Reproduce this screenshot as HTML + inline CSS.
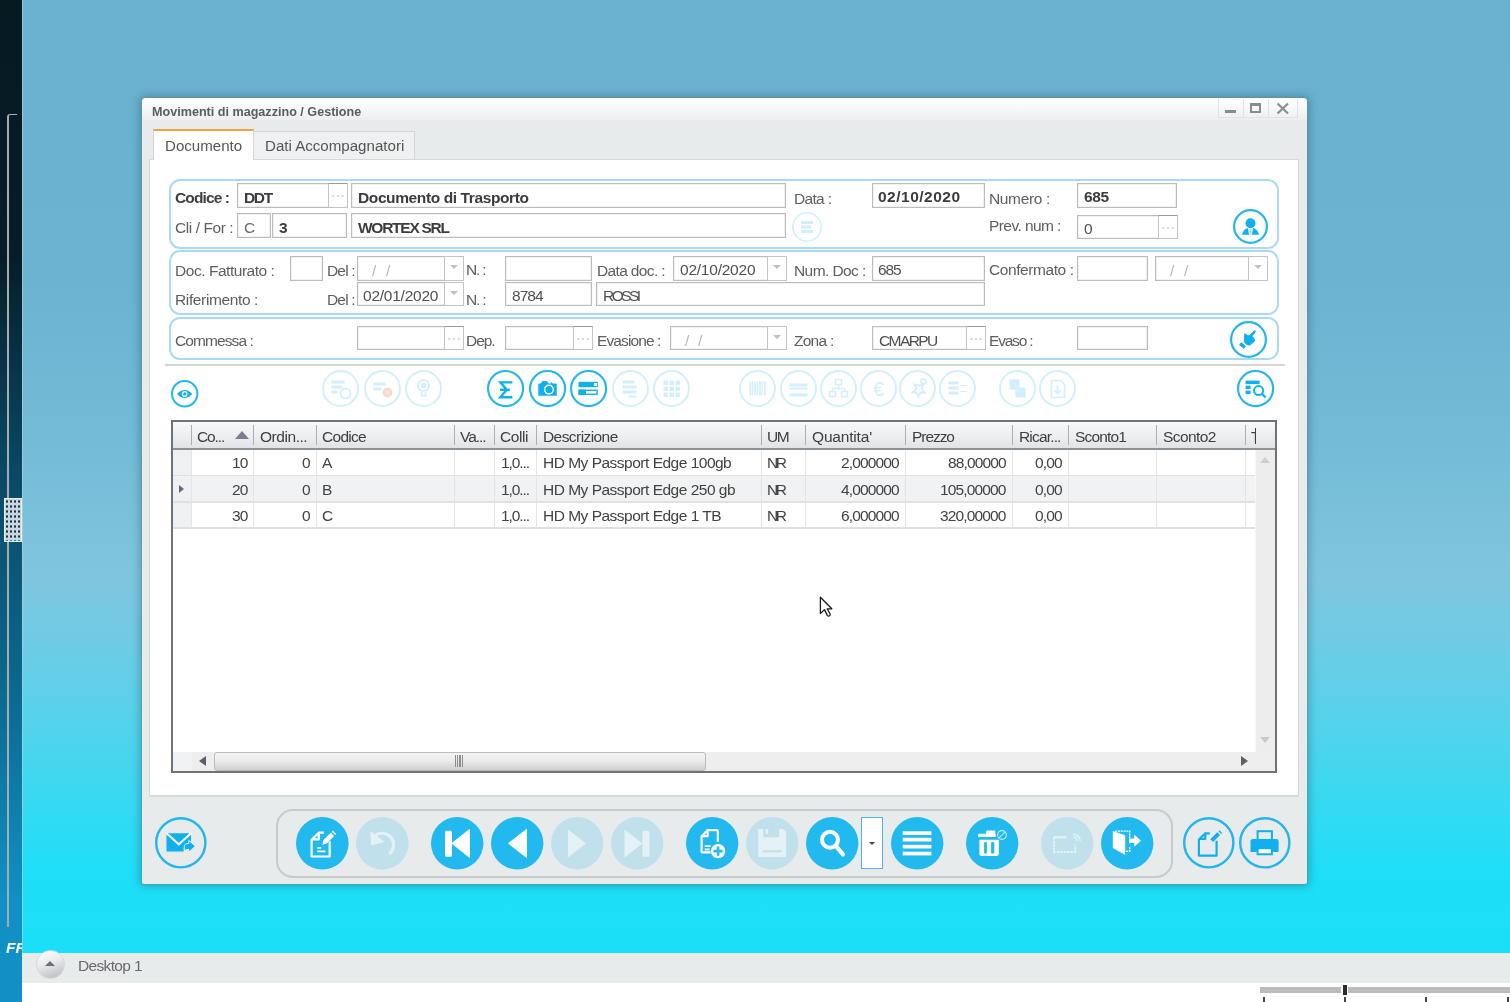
<!DOCTYPE html>
<html><head><meta charset="utf-8"><style>
*{margin:0;padding:0;box-sizing:border-box}
html,body{width:1510px;height:1002px;overflow:hidden}
body{position:relative;font-family:"Liberation Sans", sans-serif;background:#fff}
.a{position:absolute}
.t{position:absolute;white-space:nowrap;line-height:1;will-change:transform}
.inp{background:#fff;border:1px solid #bcbcbc;box-shadow:inset 0 0 0 0.5px #e4e4e4}
.btn3{background:#fff;border:1px solid #c4c4c4;border-top-color:#9a9a9a}
.btn3 span{position:absolute;left:50%;top:11px;width:2px;height:2px;margin-left:-1px;background:#cdcdcd;border-radius:1px;box-shadow:-4.8px 0 0 #cdcdcd,4.8px 0 0 #cdcdcd}
.ddb{background:#fff;border:1px solid #c4c4c4}
.ddb i{position:absolute;left:50%;top:8px;margin-left:-4px;width:0;height:0;border-left:4px solid transparent;border-right:4px solid transparent;border-top:4px solid #c0c0c0}
.grp{position:absolute;border:2px solid #aad9f6;border-radius:11px}
.ic{position:absolute;border-radius:50%}
svg{position:absolute;overflow:visible}
</style></head><body>

<div class="a" style="left:22px;top:0;width:1488px;height:953px;background:linear-gradient(to bottom,#69b1ce 0px,#6bb3d0 280px,#72bad6 430px,#80c5df 575px,#6ccce6 650px,#52d3ec 730px,#34daf3 810px,#1fdef7 870px,#1adff8 953px)"></div>
<div class="a" style="left:0;top:0;width:22px;height:1002px;background:linear-gradient(to bottom,#061a22 0px,#061c26 250px,#0a4a66 480px,#0c6a90 700px,#1090c4 900px,#1090c4 1002px)"></div>
<div class="a" style="left:7px;top:114px;width:10px;height:813px;border-left:2px solid #a4acb0;border-top:1.6px solid #a4acb0;border-radius:3px 0 0 0"></div>
<div class="a" style="left:21.5px;top:0;width:1px;height:953px;background:rgba(190,215,222,0.55)"></div>
<div class="a" style="left:4px;top:498px;width:18px;height:44px;background:#c8d8df;border:1px solid #e8eef0;background-image:radial-gradient(circle,#203040 1px,transparent 1.3px);background-size:4px 5px"></div>
<div class="a" style="left:0;top:936px;width:22px;height:20px;overflow:hidden"><div class="t" style="left:6px;top:4px;font-size:15.5px;font-weight:bold;font-style:italic;color:#fff">FR</div></div>
<div class="a" style="left:22px;top:953px;width:1488px;height:30px;background:#e7ebec;border-top:1px solid #dff6fb"></div>
<div class="ic" style="left:35.5px;top:950px;width:29px;height:29px;background:linear-gradient(160deg,#ffffff 0%,#e8eaec 45%,#b4b8bc 100%);border:1px solid #d6d9db"></div>
<div class="a" style="left:45px;top:961px;width:0;height:0;border-left:5px solid transparent;border-right:5px solid transparent;border-bottom:5px solid #6c7074"></div>
<div class="t" style="left:78.4px;top:957.7px;font-size:15.5px;letter-spacing:-0.65px;color:#6a6a6a;">Desktop 1</div>
<div class="a" style="left:1260px;top:987px;width:81px;height:6px;background:#bbbbbb"></div>
<div class="a" style="left:1343px;top:985px;width:4px;height:10px;background:#2a2a2a"></div>
<div class="a" style="left:1348px;top:987px;width:162px;height:6px;background:#bbbbbb"></div>
<div class="a" style="left:1263px;top:997px;width:2px;height:5px;background:#444"></div>
<div class="a" style="left:1344px;top:997px;width:2px;height:5px;background:#444"></div>
<div class="a" style="left:1425px;top:997px;width:2px;height:5px;background:#444"></div>
<div class="a" style="left:1507px;top:997px;width:2px;height:5px;background:#444"></div>
<div class="a" style="left:142px;top:98px;width:1165px;height:786px;background:#e7ebec;border-radius:4px 4px 2px 2px;box-shadow:0 0 0 1px rgba(120,140,150,0.35),0 0 8px 2px rgba(20,60,80,0.35)"></div>
<div class="a" style="left:142px;top:98px;width:1165px;height:22px;background:linear-gradient(to bottom,#ffffff,#eceff0);border-radius:4px 4px 0 0"></div>
<div class="t" style="left:151.5px;top:106.2px;font-size:12.6px;font-weight:bold;color:#5c5c5c;">Movimenti di magazzino / Gestione</div>
<div class="a" style="left:1218px;top:99px;width:80px;height:19px;border:1px solid #dde3e6;border-top:none;background:transparent"></div>
<div class="a" style="left:1243px;top:99px;width:1px;height:19px;background:#dde3e6"></div>
<div class="a" style="left:1268px;top:99px;width:1px;height:19px;background:#dde3e6"></div>
<div class="a" style="left:1225px;top:110px;width:11px;height:3px;background:#8c8c8c"></div>
<div class="a" style="left:1250px;top:103px;width:11px;height:10px;border:2px solid #8c8c8c;border-top-width:3px"></div>
<svg style="left:1276px;top:102px" width="14" height="13"><path d="M1.5 1.5 L12 11.5 M12 1.5 L1.5 11.5" stroke="#8c8c8c" stroke-width="2.2"/></svg>
<div class="a" style="left:253px;top:131px;width:162px;height:29px;background:#eef0f1;border:1px solid #d3d7d8;border-bottom:none"></div>
<div class="a" style="left:149px;top:159px;width:1150px;height:638px;background:#fff;border:1px solid #d5d9da;border-bottom:2px solid #d8dbdc"></div>
<div class="a" style="left:153px;top:129px;width:101px;height:31px;background:#fff;border:1px solid #d3d7d8;border-top:2.4px solid #f4a13a;border-bottom:none"></div>
<div class="t" style="left:164.7px;top:137.8px;font-size:15.1px;color:#555;">Documento</div>
<div class="t" style="left:264.6px;top:137.8px;font-size:15.1px;color:#555;">Dati Accompagnatori</div>
<div class="grp" style="left:169px;top:179px;width:1110px;height:70px"></div>
<div class="grp" style="left:169px;top:250px;width:1110px;height:65px"></div>
<div class="grp" style="left:169px;top:317px;width:1110px;height:43px"></div>
<div class="t" style="left:175.3px;top:190.3px;font-size:15.5px;font-weight:bold;letter-spacing:-0.88px;color:#404040;">Codice :</div>
<div class="a inp" style="left:237px;top:183px;width:111px;height:25px;"></div>
<div class="a btn3" style="left:328px;top:183px;width:20px;height:25px;"><span></span></div>
<div class="t" style="left:244.2px;top:189.7px;font-size:15.5px;font-weight:bold;letter-spacing:-1.38px;color:#3c3c3c;">DDT</div>
<div class="a inp" style="left:351px;top:183px;width:435px;height:25px;"></div>
<div class="t" style="left:358.0px;top:189.7px;font-size:15.5px;font-weight:bold;letter-spacing:-0.39px;color:#3c3c3c;">Documento di Trasporto</div>
<div class="t" style="left:794.0px;top:190.5px;font-size:15.5px;letter-spacing:-0.67px;color:#5e5e5e;">Data :</div>
<div class="a inp" style="left:872px;top:183px;width:113px;height:25px;"></div>
<div class="t" style="left:878.4px;top:189.4px;font-size:15.5px;font-weight:bold;letter-spacing:0.50px;color:#3c3c3c;">02/10/2020</div>
<div class="t" style="left:989.4px;top:190.5px;font-size:15.5px;letter-spacing:-0.36px;color:#5e5e5e;">Numero :</div>
<div class="a inp" style="left:1077px;top:183px;width:100px;height:25px;"></div>
<div class="t" style="left:1083.7px;top:189.3px;font-size:15.5px;font-weight:bold;letter-spacing:-0.38px;color:#3c3c3c;">685</div>
<div class="t" style="left:175.3px;top:220.3px;font-size:15.5px;letter-spacing:-0.42px;color:#5e5e5e;">Cli / For :</div>
<div class="a inp" style="left:237px;top:213px;width:34px;height:25px;"></div>
<div class="t" style="left:243.5px;top:220.3px;font-size:15.5px;color:#6a6a6a;">C</div>
<div class="a inp" style="left:272px;top:213px;width:75px;height:25px;"></div>
<div class="t" style="left:278.6px;top:220.1px;font-size:15.5px;font-weight:bold;color:#3c3c3c;">3</div>
<div class="a inp" style="left:351px;top:213px;width:435px;height:25px;"></div>
<div class="t" style="left:358.0px;top:220.1px;font-size:15.5px;font-weight:bold;letter-spacing:-1.26px;color:#3c3c3c;">WORTEX SRL</div>
<div class="t" style="left:989.4px;top:218.3px;font-size:15.5px;letter-spacing:-0.57px;color:#5e5e5e;">Prev. num :</div>
<div class="a inp" style="left:1077px;top:215px;width:101px;height:24px;"></div>
<div class="a btn3" style="left:1158px;top:215px;width:20px;height:24px;"><span></span></div>
<div class="t" style="left:1083.7px;top:220.5px;font-size:15.5px;color:#505050;">0</div>
<div class="t" style="left:175.3px;top:262.5px;font-size:15.5px;letter-spacing:-0.46px;color:#5e5e5e;">Doc. Fatturato :</div>
<div class="a inp" style="left:290px;top:256px;width:33px;height:25px;"></div>
<div class="t" style="left:326.7px;top:262.5px;font-size:15.5px;letter-spacing:-0.84px;color:#5e5e5e;">Del :</div>
<div class="a inp" style="left:357px;top:256px;width:107px;height:25px;"></div>
<div class="a ddb" style="left:444px;top:256px;width:20px;height:25px;"><i></i></div>
<div class="t" style="left:372.0px;top:263.0px;font-size:15.5px;color:#b8b8b8;">/</div>
<div class="t" style="left:385.8px;top:263.0px;font-size:15.5px;color:#b8b8b8;">/</div>
<div class="t" style="left:465.8px;top:262.2px;font-size:15.5px;letter-spacing:-1.17px;color:#5e5e5e;">N. :</div>
<div class="a inp" style="left:505px;top:256px;width:87px;height:25px;"></div>
<div class="t" style="left:597.3px;top:262.5px;font-size:15.5px;letter-spacing:-0.64px;color:#5e5e5e;">Data doc. :</div>
<div class="a inp" style="left:673px;top:256px;width:114px;height:25px;"></div>
<div class="a ddb" style="left:767px;top:256px;width:20px;height:25px;"><i></i></div>
<div class="t" style="left:680.0px;top:262.2px;font-size:15.5px;letter-spacing:-0.23px;color:#505050;">02/10/2020</div>
<div class="t" style="left:794.1px;top:262.5px;font-size:15.5px;letter-spacing:-0.59px;color:#5e5e5e;">Num. Doc :</div>
<div class="a inp" style="left:872px;top:256px;width:113px;height:25px;"></div>
<div class="t" style="left:878.4px;top:262.2px;font-size:15.5px;letter-spacing:-1.13px;color:#505050;">685</div>
<div class="t" style="left:988.9px;top:262.3px;font-size:15.5px;letter-spacing:-0.42px;color:#5e5e5e;">Confermato :</div>
<div class="a inp" style="left:1077px;top:256px;width:71px;height:25px;"></div>
<div class="a inp" style="left:1155px;top:256px;width:113px;height:25px;"></div>
<div class="a ddb" style="left:1248px;top:256px;width:20px;height:25px;"><i></i></div>
<div class="t" style="left:1169.6px;top:263.0px;font-size:15.5px;color:#b8b8b8;">/</div>
<div class="t" style="left:1184.3px;top:263.0px;font-size:15.5px;color:#b8b8b8;">/</div>
<div class="t" style="left:175.3px;top:292.3px;font-size:15.5px;letter-spacing:-0.37px;color:#5e5e5e;">Riferimento :</div>
<div class="t" style="left:326.7px;top:292.3px;font-size:15.5px;letter-spacing:-0.84px;color:#5e5e5e;">Del :</div>
<div class="a inp" style="left:357px;top:282px;width:107px;height:24px;"></div>
<div class="a ddb" style="left:444px;top:282px;width:20px;height:24px;"><i></i></div>
<div class="t" style="left:362.6px;top:288.1px;font-size:15.5px;letter-spacing:-0.24px;color:#505050;">02/01/2020</div>
<div class="t" style="left:465.8px;top:292.2px;font-size:15.5px;letter-spacing:-1.17px;color:#5e5e5e;">N. :</div>
<div class="a inp" style="left:505px;top:282px;width:87px;height:24px;"></div>
<div class="t" style="left:511.6px;top:288.1px;font-size:15.5px;letter-spacing:-0.96px;color:#505050;">8784</div>
<div class="a inp" style="left:596px;top:282px;width:389px;height:24px;"></div>
<div class="t" style="left:603.0px;top:288.1px;font-size:15.5px;letter-spacing:-2.53px;color:#505050;">ROSSI</div>
<div class="t" style="left:175.3px;top:333.3px;font-size:15.5px;letter-spacing:-0.91px;color:#5e5e5e;">Commessa :</div>
<div class="a inp" style="left:357px;top:326px;width:107px;height:24px;"></div>
<div class="a btn3" style="left:444px;top:326px;width:20px;height:24px;"><span></span></div>
<div class="t" style="left:465.6px;top:333.2px;font-size:15.5px;letter-spacing:-1.05px;color:#5e5e5e;">Dep.</div>
<div class="a inp" style="left:505px;top:326px;width:88px;height:24px;"></div>
<div class="a btn3" style="left:573px;top:326px;width:20px;height:24px;"><span></span></div>
<div class="t" style="left:596.6px;top:333.2px;font-size:15.5px;letter-spacing:-0.89px;color:#5e5e5e;">Evasione :</div>
<div class="a inp" style="left:670px;top:326px;width:117px;height:24px;"></div>
<div class="a ddb" style="left:767px;top:326px;width:20px;height:24px;"><i></i></div>
<div class="t" style="left:684.5px;top:333.4px;font-size:15.5px;color:#b8b8b8;">/</div>
<div class="t" style="left:698.3px;top:333.4px;font-size:15.5px;color:#b8b8b8;">/</div>
<div class="t" style="left:794.0px;top:333.2px;font-size:15.5px;letter-spacing:-0.75px;color:#5e5e5e;">Zona :</div>
<div class="a inp" style="left:872px;top:326px;width:114px;height:24px;"></div>
<div class="a btn3" style="left:966px;top:326px;width:20px;height:24px;"><span></span></div>
<div class="t" style="left:878.9px;top:332.7px;font-size:15.5px;letter-spacing:-1.60px;color:#505050;">CMARPU</div>
<div class="t" style="left:988.9px;top:332.5px;font-size:15.5px;letter-spacing:-1.20px;color:#5e5e5e;">Evaso :</div>
<div class="a inp" style="left:1077px;top:326px;width:71px;height:24px;"></div>
<div class="a" style="left:165px;top:364px;width:1120px;height:2px;background:#d6d6d6"></div>
<svg style="left:790.3px;top:209.6px" width="34" height="34" viewBox="-17 -17 34 34"><circle cx="0" cy="0" r="14.2" fill="none" stroke="#d2effb" stroke-width="1.6"/><g fill="#d2effb"><rect x="-6" y="-6" width="12" height="3"/><rect x="-6" y="-1.5" width="10" height="3"/><rect x="-6" y="3" width="12" height="3"/></g></svg>
<svg style="left:1230.5px;top:207.0px" width="39.0" height="39.0" viewBox="-19.5 -19.5 39.0 39.0"><circle cx="0" cy="0" r="16.4" fill="none" stroke="#22b6ec" stroke-width="2.2"/><g fill="#10b0ee"><circle cx="0" cy="-3.3" r="5"/><path d="M-8.7 8.3 Q-6.5 2.2 -2.6 1.6 L-1.4 8.3 Z M8.7 8.3 Q6.5 2.2 2.6 1.6 L1.4 8.3 Z"/><rect x="-1" y="3" width="2" height="5" fill="#9ed8f4"/></g></svg>
<svg style="left:1228.25px;top:318.75px" width="41.0" height="41.0" viewBox="-20.5 -20.5 41.0 41.0"><circle cx="0" cy="0" r="17.4" fill="none" stroke="#22b6ec" stroke-width="2.2"/><g fill="#10b0ee"><path d="M-4 -6.5 L-1.2 -4.6 L1 -4.2 L5.6 -9.2 Q6.6 -9.8 7.4 -7.9 L3.9 -3.2 Q6.9 -1 6.8 1.2 L1.5 6 Q-1.5 6.5 -4.2 3.2 Q-5.2 -2 -4 -6.5 Z"/><rect x="-9.2" y="4.2" width="6.4" height="3.6" rx="1" transform="rotate(38 -6 6)"/></g></svg>
<svg style="left:169.10000000000002px;top:378.2px" width="31.4" height="31.4" viewBox="-15.7 -15.7 31.4 31.4"><circle cx="0" cy="0" r="12.7" fill="none" stroke="#22b6ec" stroke-width="2"/><g><path d="M-7.6 0.2 Q-4 -3.8 0 -3.8 Q4 -3.8 7.6 0.2 Q4 4.2 0 4.2 Q-4 4.2 -7.6 0.2 Z" fill="#10b0ee"/><circle cy="0.2" r="2.9" fill="#fff"/><circle cy="0.2" r="1.6" fill="#10b0ee"/></g></svg>
<svg style="left:320.3px;top:368.3px" width="41.0" height="41.0" viewBox="-20.5 -20.5 41.0 41.0"><circle cx="0" cy="0" r="17.5" fill="none" stroke="#d2effb" stroke-width="2"/><g fill="#d2effb"><rect x="-9" y="-8" width="13" height="3"/><rect x="-9" y="-3" width="11" height="3"/><rect x="-9" y="2" width="6" height="3"/><circle cx="5" cy="5" r="5" fill="none" stroke="#d2effb" stroke-width="1.8"/></g></svg>
<svg style="left:361.5px;top:368.3px" width="41.0" height="41.0" viewBox="-20.5 -20.5 41.0 41.0"><circle cx="0" cy="0" r="17.5" fill="none" stroke="#d2effb" stroke-width="2"/><g fill="#d2effb"><rect x="-9" y="-6" width="12" height="3"/><rect x="-9" y="-1" width="8" height="3"/><circle cx="5" cy="4" r="5" fill="#f5dccf"/><path d="M3 2 L7 6 M7 2 L3 6" stroke="#fbeee6" stroke-width="1"/></g></svg>
<svg style="left:403.2px;top:368.3px" width="41.0" height="41.0" viewBox="-20.5 -20.5 41.0 41.0"><circle cx="0" cy="0" r="17.5" fill="none" stroke="#d2effb" stroke-width="2"/><g fill="none" stroke="#d2effb" stroke-width="1.8"><circle cx="0" cy="-3" r="5.5"/><path d="M-2 3.5 V7 H2 V3.5"/></g><circle cx="0" cy="-3" r="3" fill="#d2effb"/></svg>
<svg style="left:485.29999999999995px;top:368.29999999999995px" width="41.2" height="41.2" viewBox="-20.6 -20.6 41.2 41.2"><circle cx="0" cy="0" r="17.55" fill="none" stroke="#22b6ec" stroke-width="2.1"/><path d="M6.8 -6.2 H-5.2 L1.2 1.2 L-5.2 8.6 H6.8 M-5.6 1.2 H4.2" fill="none" stroke="#10b0ee" stroke-width="2.4"/></svg>
<svg style="left:526.8px;top:368.29999999999995px" width="41.2" height="41.2" viewBox="-20.6 -20.6 41.2 41.2"><circle cx="0" cy="0" r="17.55" fill="none" stroke="#22b6ec" stroke-width="2.1"/><g><path d="M-9.3 -4.5 Q-9.3 -5.2 -8.5 -5.2 H-7 L-5 -7.6 H-1 L1 -5.2 H3 L4 -6.5 L5 -5.2 H8.5 Q9.2 -5.2 9.2 -4.5 V7.2 H-9.3 Z" fill="#10b0ee"/><circle cx="1.4" cy="1" r="5" fill="#fff"/><circle cx="1.4" cy="1" r="3.6" fill="#10b0ee"/></g></svg>
<svg style="left:568.3px;top:368.29999999999995px" width="41.2" height="41.2" viewBox="-20.6 -20.6 41.2 41.2"><circle cx="0" cy="0" r="17.55" fill="none" stroke="#22b6ec" stroke-width="2.1"/><g><rect x="-10.1" y="-6.8" width="19.3" height="5.4" fill="#10b0ee"/><rect x="5.5" y="-5.6" width="2.8" height="3" fill="#fff"/><rect x="-9.4" y="1.7" width="17.9" height="4" fill="none" stroke="#10b0ee" stroke-width="1.4"/><rect x="-10.1" y="1" width="7.5" height="5.4" fill="#10b0ee"/></g></svg>
<svg style="left:609.5px;top:368.4px" width="41.0" height="41.0" viewBox="-20.5 -20.5 41.0 41.0"><circle cx="0" cy="0" r="17.5" fill="none" stroke="#d2effb" stroke-width="2"/><g fill="#d2effb"><rect x="-8" y="-8" width="12" height="3"/><rect x="-8" y="-3" width="14" height="3"/><rect x="-8" y="2" width="14" height="3"/><rect x="-2" y="7" width="8" height="2"/></g></svg>
<svg style="left:650.7px;top:368.4px" width="41.0" height="41.0" viewBox="-20.5 -20.5 41.0 41.0"><circle cx="0" cy="0" r="17.5" fill="none" stroke="#d2effb" stroke-width="2"/><g fill="#d2effb"><rect x="-8" y="-8" width="4.5" height="4.5"/><rect x="-8" y="-2" width="4.5" height="4.5"/><rect x="-8" y="4" width="4.5" height="4.5"/><rect x="-2" y="-8" width="4.5" height="4.5"/><rect x="-2" y="-2" width="4.5" height="4.5"/><rect x="-2" y="4" width="4.5" height="4.5"/><rect x="4" y="-8" width="4.5" height="4.5"/><rect x="4" y="-2" width="4.5" height="4.5"/><rect x="4" y="4" width="4.5" height="4.5"/></g></svg>
<svg style="left:736.7px;top:368.3px" width="41.0" height="41.0" viewBox="-20.5 -20.5 41.0 41.0"><circle cx="0" cy="0" r="17.5" fill="none" stroke="#d2effb" stroke-width="2"/><g fill="#d2effb"><rect x="-8.0" y="-7" width="1.8" height="14"/><rect x="-5.6" y="-7" width="1.2" height="14"/><rect x="-3.2" y="-7" width="1.8" height="14"/><rect x="-0.8000000000000007" y="-7" width="1.2" height="14"/><rect x="1.5999999999999996" y="-7" width="1.8" height="14"/><rect x="4.0" y="-7" width="1.2" height="14"/><rect x="6.399999999999999" y="-7" width="1.8" height="14"/></g></svg>
<svg style="left:777.7px;top:368.3px" width="41.0" height="41.0" viewBox="-20.5 -20.5 41.0 41.0"><circle cx="0" cy="0" r="17.5" fill="none" stroke="#d2effb" stroke-width="2"/><g fill="#d2effb"><rect x="-9" y="-5" width="18" height="3"/><rect x="-9" y="-1" width="18" height="2"/><rect x="-9" y="5" width="18" height="3"/></g></svg>
<svg style="left:817.7px;top:368.3px" width="41.0" height="41.0" viewBox="-20.5 -20.5 41.0 41.0"><circle cx="0" cy="0" r="17.5" fill="none" stroke="#d2effb" stroke-width="2"/><g fill="none" stroke="#d2effb" stroke-width="1.5"><rect x="-3" y="-9" width="6" height="5"/><rect x="-9" y="3" width="6" height="5"/><rect x="3" y="3" width="6" height="5"/><path d="M0 -4 V0 H-6 V3 M0 0 H6 V3"/></g></svg>
<svg style="left:858.3px;top:368.3px" width="41.0" height="41.0" viewBox="-20.5 -20.5 41.0 41.0"><circle cx="0" cy="0" r="17.5" fill="none" stroke="#d2effb" stroke-width="2"/><text x="0" y="7" text-anchor="middle" font-family="Liberation Sans" font-size="20" fill="#d2effb">&#8364;</text></svg>
<svg style="left:897.2px;top:368.3px" width="41.0" height="41.0" viewBox="-20.5 -20.5 41.0 41.0"><circle cx="0" cy="0" r="17.5" fill="none" stroke="#d2effb" stroke-width="2"/><g fill="none" stroke="#d2effb" stroke-width="1.8"><path d="M-3 -4 L-1 0 L-5 4 L-1 4 L1 8 L3 4 L7 4 L4 0 L6 -4 L2 -3 Z"/><circle cx="6" cy="-7" r="2.5"/></g></svg>
<svg style="left:937.0px;top:368.3px" width="41.0" height="41.0" viewBox="-20.5 -20.5 41.0 41.0"><circle cx="0" cy="0" r="17.5" fill="none" stroke="#d2effb" stroke-width="2"/><g fill="#d2effb"><rect x="-9" y="-7" width="10" height="3"/><rect x="-9" y="-2" width="10" height="3"/><rect x="-9" y="3" width="10" height="3"/><path d="M3 -3 H9 M3 3 H9" stroke="#d2effb" stroke-width="1.2"/></g></svg>
<svg style="left:996.6px;top:368.3px" width="41.0" height="41.0" viewBox="-20.5 -20.5 41.0 41.0"><circle cx="0" cy="0" r="17.5" fill="none" stroke="#d2effb" stroke-width="2"/><g fill="#d2effb"><rect x="-8" y="-9" width="10" height="10"/><rect x="-2" y="-1" width="10" height="10"/></g></svg>
<svg style="left:1036.5px;top:368.3px" width="41.0" height="41.0" viewBox="-20.5 -20.5 41.0 41.0"><circle cx="0" cy="0" r="17.5" fill="none" stroke="#d2effb" stroke-width="2"/><g fill="none" stroke="#d2effb" stroke-width="1.6"><path d="M-6 -8 H3 L7 -4 V9 H-6 Z"/><path d="M0 -3 V5 M-3 2 L0 5 L3 2"/></g></svg>
<svg style="left:1235.4px;top:368.29999999999995px" width="41.2" height="41.2" viewBox="-20.6 -20.6 41.2 41.2"><circle cx="0" cy="0" r="17.55" fill="none" stroke="#22b6ec" stroke-width="2.1"/><g fill="#10b0ee"><rect x="-10" y="-8" width="14" height="3.5"/><rect x="-10" y="-3" width="5" height="3.5"/><rect x="-10" y="2" width="5" height="3.5"/><circle cx="3" cy="2" r="4.5" fill="none" stroke="#10b0ee" stroke-width="2"/><path d="M6 5 L10 9" stroke="#10b0ee" stroke-width="2.2"/></g></svg>
<div class="a" style="left:171px;top:420px;width:1106px;height:353px;background:#fff;border:2px solid #6f7377"></div>
<div class="a" style="left:173px;top:422px;width:1102px;height:26px;background:linear-gradient(to bottom,#f7f8f9,#eceef0 55%,#e1e4e6)"></div>
<div class="a" style="left:173px;top:447.5px;width:1102px;height:2px;background:#8e9295"></div>
<div class="a" style="left:191.2px;top:425px;width:1px;height:20px;background:#a9afb3"></div>
<div class="a" style="left:253.2px;top:425px;width:1px;height:20px;background:#a9afb3"></div>
<div class="a" style="left:316.2px;top:425px;width:1px;height:20px;background:#a9afb3"></div>
<div class="a" style="left:454.0px;top:425px;width:1px;height:20px;background:#a9afb3"></div>
<div class="a" style="left:494.1px;top:425px;width:1px;height:20px;background:#a9afb3"></div>
<div class="a" style="left:536.0px;top:425px;width:1px;height:20px;background:#a9afb3"></div>
<div class="a" style="left:761.2px;top:425px;width:1px;height:20px;background:#a9afb3"></div>
<div class="a" style="left:805.0px;top:425px;width:1px;height:20px;background:#a9afb3"></div>
<div class="a" style="left:905.2px;top:425px;width:1px;height:20px;background:#a9afb3"></div>
<div class="a" style="left:1012.2px;top:425px;width:1px;height:20px;background:#a9afb3"></div>
<div class="a" style="left:1068.3px;top:425px;width:1px;height:20px;background:#a9afb3"></div>
<div class="a" style="left:1156.0px;top:425px;width:1px;height:20px;background:#a9afb3"></div>
<div class="a" style="left:1244.6px;top:425px;width:1px;height:20px;background:#a9afb3"></div>
<div class="a" style="left:173px;top:449.5px;width:18.5px;height:78.5px;background:#eef0f2"></div>
<div class="a" style="left:191.5px;top:475.5px;width:1063.5px;height:26.5px;background:#f1f2f4"></div>
<div class="a" style="left:173px;top:474.8px;width:1082px;height:1.4px;background:#dde1e4"></div>
<div class="a" style="left:173px;top:501.3px;width:1082px;height:1.4px;background:#dde1e4"></div>
<div class="a" style="left:173px;top:527.3px;width:1082px;height:1.4px;background:#dde1e4"></div>
<div class="a" style="left:191.2px;top:449.5px;width:1.2px;height:78.5px;background:#e1e5e8"></div>
<div class="a" style="left:253.2px;top:449.5px;width:1.2px;height:78.5px;background:#e1e5e8"></div>
<div class="a" style="left:316.2px;top:449.5px;width:1.2px;height:78.5px;background:#e1e5e8"></div>
<div class="a" style="left:454.0px;top:449.5px;width:1.2px;height:78.5px;background:#e1e5e8"></div>
<div class="a" style="left:494.1px;top:449.5px;width:1.2px;height:78.5px;background:#e1e5e8"></div>
<div class="a" style="left:536.0px;top:449.5px;width:1.2px;height:78.5px;background:#e1e5e8"></div>
<div class="a" style="left:761.2px;top:449.5px;width:1.2px;height:78.5px;background:#e1e5e8"></div>
<div class="a" style="left:805.0px;top:449.5px;width:1.2px;height:78.5px;background:#e1e5e8"></div>
<div class="a" style="left:905.2px;top:449.5px;width:1.2px;height:78.5px;background:#e1e5e8"></div>
<div class="a" style="left:1012.2px;top:449.5px;width:1.2px;height:78.5px;background:#e1e5e8"></div>
<div class="a" style="left:1068.3px;top:449.5px;width:1.2px;height:78.5px;background:#e1e5e8"></div>
<div class="a" style="left:1156.0px;top:449.5px;width:1.2px;height:78.5px;background:#e1e5e8"></div>
<div class="a" style="left:1244.6px;top:449.5px;width:1.2px;height:78.5px;background:#e1e5e8"></div>
<div class="a" style="left:1255px;top:449.5px;width:20px;height:302.5px;background:#ededed;box-shadow:inset 1px 0 0 #f6f7f7"></div>
<div class="a" style="left:1260px;top:457px;width:0;height:0;border-left:5px solid transparent;border-right:5px solid transparent;border-bottom:6px solid #cfcfcf"></div>
<div class="a" style="left:1260px;top:737px;width:0;height:0;border-left:5px solid transparent;border-right:5px solid transparent;border-top:6.5px solid #c9c9c9"></div>
<div class="a" style="left:173px;top:752px;width:1102px;height:19px;background:#eeeeee"></div>
<div class="a" style="left:173px;top:752px;width:18.5px;height:19px;background:#f1f2f4"></div>
<div class="a" style="left:199px;top:756px;width:0;height:0;border-top:5px solid transparent;border-bottom:5px solid transparent;border-right:7px solid #5a6068"></div>
<div class="a" style="left:1241px;top:756px;width:0;height:0;border-top:5px solid transparent;border-bottom:5px solid transparent;border-left:7px solid #5a6068"></div>
<div class="a" style="left:214px;top:752px;width:491.5px;height:19px;background:linear-gradient(to bottom,#f4f4f4,#ececec 45%,#cfd0d1);border:1px solid #b9bbbd;border-radius:3px"></div>
<div class="a" style="left:455.0px;top:755px;width:1.2px;height:12px;background:#8a8c8e"></div>
<div class="a" style="left:457.2px;top:755px;width:1.2px;height:12px;background:#8a8c8e"></div>
<div class="a" style="left:459.4px;top:755px;width:1.2px;height:12px;background:#8a8c8e"></div>
<div class="a" style="left:461.6px;top:755px;width:1.2px;height:12px;background:#8a8c8e"></div>
<div class="t" style="left:197.3px;top:428.6px;font-size:15.5px;letter-spacing:-1.11px;color:#3e3e3e;">Co...</div>
<div class="t" style="left:259.5px;top:428.6px;font-size:15.5px;letter-spacing:-0.45px;color:#3e3e3e;">Ordin...</div>
<div class="t" style="left:322.4px;top:428.6px;font-size:15.5px;letter-spacing:-0.71px;color:#3e3e3e;">Codice</div>
<div class="t" style="left:460.3px;top:428.6px;font-size:15.5px;letter-spacing:-1.06px;color:#3e3e3e;">Va...</div>
<div class="t" style="left:500.4px;top:428.6px;font-size:15.5px;letter-spacing:-0.41px;color:#3e3e3e;">Colli</div>
<div class="t" style="left:542.5px;top:428.6px;font-size:15.5px;letter-spacing:-0.57px;color:#3e3e3e;">Descrizione</div>
<div class="t" style="left:767.4px;top:428.6px;font-size:15.5px;letter-spacing:-1.40px;color:#3e3e3e;">UM</div>
<div class="t" style="left:811.6px;top:428.6px;font-size:15.5px;letter-spacing:-0.18px;color:#3e3e3e;">Quantita&#x27;</div>
<div class="t" style="left:911.5px;top:428.6px;font-size:15.5px;letter-spacing:-1.05px;color:#3e3e3e;">Prezzo</div>
<div class="t" style="left:1018.7px;top:428.6px;font-size:15.5px;letter-spacing:-0.83px;color:#3e3e3e;">Ricar...</div>
<div class="t" style="left:1074.8px;top:428.6px;font-size:15.5px;letter-spacing:-0.83px;color:#3e3e3e;">Sconto1</div>
<div class="t" style="left:1162.6px;top:428.6px;font-size:15.5px;letter-spacing:-0.59px;color:#3e3e3e;">Sconto2</div>
<div class="a" style="left:1250px;top:428px;width:5px;height:18px;overflow:hidden"><div class="t" style="left:0.5px;top:1px;font-size:15px;color:#3e3e3e">T</div></div>
<div class="a" style="left:1254.5px;top:428px;width:1px;height:16px;background:#3e3e3e"></div>
<div class="a" style="left:234.5px;top:430.5px;width:0;height:0;border-left:7px solid transparent;border-right:7px solid transparent;border-bottom:8.5px solid #7c7c92"></div>
<div class="a" style="left:178.5px;top:484.5px;width:0;height:0;border-top:4.7px solid transparent;border-bottom:4.7px solid transparent;border-left:5.5px solid #5d6a80"></div>
<div class="t" style="left:231.5px;top:455.4px;font-size:15.5px;letter-spacing:-0.85px;color:#424242;">10</div>
<div class="t" style="left:302.3px;top:455.4px;font-size:15.5px;color:#424242;">0</div>
<div class="t" style="left:322.4px;top:455.4px;font-size:15.5px;color:#424242;">A</div>
<div class="t" style="left:501.2px;top:455.4px;font-size:15.5px;letter-spacing:-1.09px;color:#424242;">1,0...</div>
<div class="t" style="left:542.5px;top:455.4px;font-size:15.5px;letter-spacing:-0.50px;color:#424242;">HD My Passport Edge 100gb</div>
<div class="t" style="left:767.4px;top:455.4px;font-size:15.5px;letter-spacing:-2.48px;color:#424242;">NR</div>
<div class="t" style="left:840.8px;top:455.4px;font-size:15.5px;letter-spacing:-0.85px;color:#424242;">2,000000</div>
<div class="t" style="left:947.6px;top:455.4px;font-size:15.5px;letter-spacing:-0.85px;color:#424242;">88,00000</div>
<div class="t" style="left:1035.0px;top:455.4px;font-size:15.5px;letter-spacing:-0.85px;color:#424242;">0,00</div>
<div class="t" style="left:231.5px;top:481.9px;font-size:15.5px;letter-spacing:-0.85px;color:#424242;">20</div>
<div class="t" style="left:302.3px;top:481.9px;font-size:15.5px;color:#424242;">0</div>
<div class="t" style="left:322.4px;top:481.9px;font-size:15.5px;color:#424242;">B</div>
<div class="t" style="left:501.2px;top:481.9px;font-size:15.5px;letter-spacing:-1.09px;color:#424242;">1,0...</div>
<div class="t" style="left:542.5px;top:481.9px;font-size:15.5px;letter-spacing:-0.50px;color:#424242;">HD My Passport Edge 250 gb</div>
<div class="t" style="left:767.4px;top:481.9px;font-size:15.5px;letter-spacing:-2.48px;color:#424242;">NR</div>
<div class="t" style="left:840.8px;top:481.9px;font-size:15.5px;letter-spacing:-0.85px;color:#424242;">4,000000</div>
<div class="t" style="left:939.8px;top:481.9px;font-size:15.5px;letter-spacing:-0.85px;color:#424242;">105,00000</div>
<div class="t" style="left:1035.0px;top:481.9px;font-size:15.5px;letter-spacing:-0.85px;color:#424242;">0,00</div>
<div class="t" style="left:231.5px;top:508.4px;font-size:15.5px;letter-spacing:-0.85px;color:#424242;">30</div>
<div class="t" style="left:302.3px;top:508.4px;font-size:15.5px;color:#424242;">0</div>
<div class="t" style="left:322.4px;top:508.4px;font-size:15.5px;color:#424242;">C</div>
<div class="t" style="left:501.2px;top:508.4px;font-size:15.5px;letter-spacing:-1.09px;color:#424242;">1,0...</div>
<div class="t" style="left:542.5px;top:508.4px;font-size:15.5px;letter-spacing:-0.50px;color:#424242;">HD My Passport Edge 1 TB</div>
<div class="t" style="left:767.4px;top:508.4px;font-size:15.5px;letter-spacing:-2.48px;color:#424242;">NR</div>
<div class="t" style="left:840.8px;top:508.4px;font-size:15.5px;letter-spacing:-0.85px;color:#424242;">6,000000</div>
<div class="t" style="left:939.8px;top:508.4px;font-size:15.5px;letter-spacing:-0.85px;color:#424242;">320,00000</div>
<div class="t" style="left:1035.0px;top:508.4px;font-size:15.5px;letter-spacing:-0.85px;color:#424242;">0,00</div>
<div class="a" style="left:276px;top:809px;width:897px;height:69px;border:2px solid #c8cacb;border-radius:17px"></div>
<svg style="left:293.8px;top:815.0px" width="56.6" height="56.6" viewBox="-28.3 -28.3 56.6 56.6"><circle cx="0" cy="0" r="26.3" fill="#22b9ee"/><g fill="none" stroke="#ffffff" stroke-width="2.2" stroke-linejoin="round"><path d="M-3.5 -10.6 H1.5 M7.4 -2 V13.2 H-10.7 V-3.5 L-3.5 -10.6 V-4 H-10"/></g><path d="M-5 4.5 H-1 M-5 8 H3" stroke="#ffffff" stroke-width="1.8"/><path d="M1.2 -3.2 L8.5 -10.5 L11.8 -7.2 L4.5 0.1 Z M9.6 -11.6 L10.6 -12.6 L13.9 -9.3 L12.9 -8.3 Z" fill="#ffffff"/><path d="M0 1.4 L1.2 -3.2 L4.5 0.1 Z" fill="#ffffff"/></svg>
<svg style="left:353.7px;top:815.0px" width="56.6" height="56.6" viewBox="-28.3 -28.3 56.6 56.6"><circle cx="0" cy="0" r="26.3" fill="#c0e1ec"/><path d="M7 10.5 A10.5 10.5 0 1 0 -7.5 -7.5" fill="none" stroke="#e4f1f5" stroke-width="3"/><path d="M-11.8 -12 L-11.3 2.2 L2.2 -1.6 Z" fill="#e4f1f5"/></svg>
<svg style="left:428.8px;top:815.0px" width="56.4" height="56.4" viewBox="-28.2 -28.2 56.4 56.4"><circle cx="0" cy="0" r="26.2" fill="#22b9ee"/><rect x="-12.2" y="-12.5" width="7" height="26" rx="1.5" fill="#ffffff"/><path d="M12.3 -13.8 V14.2 L-5.2 0.2 Z" fill="#ffffff" stroke="#ffffff" stroke-width="1" stroke-linejoin="round"/></svg>
<svg style="left:488.8px;top:815.0px" width="56.4" height="56.4" viewBox="-28.2 -28.2 56.4 56.4"><circle cx="0" cy="0" r="26.2" fill="#22b9ee"/><path d="M9.3 -13.8 V14.2 L-8.6 0.2 Z" fill="#ffffff" stroke="#ffffff" stroke-width="1" stroke-linejoin="round"/></svg>
<svg style="left:549.0px;top:815.0px" width="56.4" height="56.4" viewBox="-28.2 -28.2 56.4 56.4"><circle cx="0" cy="0" r="26.2" fill="#c0e1ec"/><path d="M-9.2 -13.8 V14.2 L8.7 0.2 Z" fill="#e4f1f5"/></svg>
<svg style="left:609.0999999999999px;top:815.0px" width="56.4" height="56.4" viewBox="-28.2 -28.2 56.4 56.4"><circle cx="0" cy="0" r="26.2" fill="#c0e1ec"/><rect x="5.2" y="-12.5" width="7" height="26" rx="1.5" fill="#e4f1f5"/><path d="M-12.7 -13.8 V14.2 L5.2 0.2 Z" fill="#e4f1f5"/></svg>
<svg style="left:683.8px;top:815.0px" width="56.4" height="56.4" viewBox="-28.2 -28.2 56.4 56.4"><circle cx="0" cy="0" r="26.2" fill="#22b9ee"/><g fill="none" stroke="#ffffff" stroke-width="2.2" stroke-linejoin="round"><path d="M5.6 -1.5 V-12 Q5.6 -13.1 4.6 -13.1 H-4.5 L-10.6 -7 V8.2 Q-10.6 9.2 -9.6 9.2 H-1.5 M-4.5 -13.1 V-7 H-10.6"/></g><path d="M-7.5 3 H-1.5 M-7.5 6.3 H-2.5" stroke="#ffffff" stroke-width="1.8"/><circle cx="5.9" cy="7.9" r="7.2" fill="#ffffff"/><path d="M5.9 3.3 V12.5 M1.3 7.9 H10.5" stroke="#22b9ee" stroke-width="2.6"/></svg>
<svg style="left:743.8px;top:815.0px" width="56.4" height="56.4" viewBox="-28.2 -28.2 56.4 56.4"><circle cx="0" cy="0" r="26.2" fill="#c0e1ec"/><path d="M-14 -14.2 H-9 V-6 H7 V-14.2 H11 L14 -11.2 V13.8 H-14 Z" fill="#e4f1f5"/><rect x="-6.5" y="-14.2" width="2.5" height="5" fill="#e4f1f5"/><rect x="-9.5" y="7" width="19" height="2.2" fill="#c0e1ec"/></svg>
<svg style="left:803.5999999999999px;top:815.0px" width="56.4" height="56.4" viewBox="-28.2 -28.2 56.4 56.4"><circle cx="0" cy="0" r="26.2" fill="#22b9ee"/><circle cx="-2.2" cy="-3.4" r="8" fill="none" stroke="#ffffff" stroke-width="4"/><path d="M3.6 2.6 L10.8 11.2" stroke="#ffffff" stroke-width="4.2" stroke-linecap="round"/></svg>
<div class="a" style="left:861px;top:817px;width:22px;height:52px;background:#fff;border:1px solid #56b2ee"></div>
<div class="a" style="left:868.5px;top:842px;width:0;height:0;border-left:3.5px solid transparent;border-right:3.5px solid transparent;border-top:3.5px solid #444"></div>
<svg style="left:888.9px;top:815.0px" width="56.4" height="56.4" viewBox="-28.2 -28.2 56.4 56.4"><circle cx="0" cy="0" r="26.2" fill="#22b9ee"/><g fill="#ffffff"><rect x="-14.5" y="-11.9" width="28.7" height="3.7"/><rect x="-14.5" y="-5.4" width="28.7" height="3.7"/><rect x="-14.5" y="1.6" width="28.7" height="3.7"/><rect x="-14.5" y="8.5" width="28.7" height="3.7"/></g></svg>
<svg style="left:963.5999999999999px;top:815.0px" width="56.4" height="56.4" viewBox="-28.2 -28.2 56.4 56.4"><circle cx="0" cy="0" r="26.2" fill="#22b9ee"/><g fill="#ffffff"><path d="M-14.1 -6.3 V-8.2 Q-14.1 -9.5 -12.8 -9.5 H-6.1 V-11.5 Q-6.1 -12.8 -4.8 -12.8 H1.8 Q3.1 -12.8 3.1 -11.5 V-9.5 Q3.5 -9.5 3.5 -8.2 V-6.3 Z"/><path d="M-12.8 -3.5 H6.7 V10.2 Q6.7 12.7 4.2 12.7 H-10.3 Q-12.8 12.7 -12.8 10.2 Z"/></g><g fill="#22b9ee"><rect x="-8.1" y="-1.2" width="2.8" height="11.6" rx="1.2"/><rect x="-1.1" y="-1.2" width="3.2" height="11.6" rx="1.2"/></g><circle cx="9.8" cy="-8.2" r="4.4" fill="none" stroke="#bfe9fa" stroke-width="1.1"/><path d="M6.9 -5.3 L12.7 -11.1" stroke="#bfe9fa" stroke-width="1.1"/></svg>
<svg style="left:1038.8px;top:815.0px" width="56.4" height="56.4" viewBox="-28.2 -28.2 56.4 56.4"><circle cx="0" cy="0" r="26.2" fill="#c0e1ec"/><g fill="none" stroke="#e4f1f5" stroke-width="2" stroke-dasharray="2.5 1"><path d="M-13.2 -6 V8.8 H8 V1.5"/><path d="M-13.2 -6 H-1"/></g><path d="M-13.2 -6 H-1" stroke="#e4f1f5" stroke-width="2.2"/><g fill="none" stroke="#e4f1f5" stroke-width="1.5"><path d="M6 -9 A7 7 0 0 1 13 -2"/><path d="M6 -6 A4 4 0 0 1 10 -2"/></g></svg>
<svg style="left:1099.0px;top:815.0px" width="56.4" height="56.4" viewBox="-28.2 -28.2 56.4 56.4"><circle cx="0" cy="0" r="26.2" fill="#22b9ee"/><path d="M-14.4 -12.1 L-2 -8 V11.9 L-14.4 4.8 Z" fill="#ffffff"/><path d="M-12 -12.1 H2.5 V-4 M2.5 4 V8 H-2" fill="none" stroke="#ffffff" stroke-width="1.4" stroke-dasharray="2 0.8"/><path d="M1.8 -4.8 H7 V-8.6 L13.8 -2.5 L7 3.6 V-0.2 H1.8 Z" fill="#ffffff"/></svg>
<svg style="left:1181.0px;top:815.4000000000001px" width="55.6" height="55.6" viewBox="-27.8 -27.8 55.6 55.6"><circle cx="0" cy="0" r="24.6" fill="none" stroke="#22b6ec" stroke-width="2.4"/><g fill="none" stroke="#10b0ee" stroke-width="2.2" stroke-linejoin="round"><path d="M-3 -9.5 H1 M7.8 -2 V12.9 H-9.9 V-3.3 L-3.5 -9.6 V-4 H-9.5"/></g><path d="M1.5 -3.5 L8.5 -10.5 L11.3 -7.7 L4.3 -0.7 Z M9.6 -11.6 L10.6 -12.6 L13.4 -9.8 L12.4 -8.8 Z" fill="#10b0ee"/></svg>
<svg style="left:1237.4px;top:815.4000000000001px" width="55.6" height="55.6" viewBox="-27.8 -27.8 55.6 55.6"><circle cx="0" cy="0" r="24.6" fill="none" stroke="#22b6ec" stroke-width="2.4"/><rect x="-7.2" y="-11.6" width="14.3" height="10" fill="none" stroke="#10b0ee" stroke-width="2"/><path d="M-14.3 -1.5 Q-14.3 -3.8 -12 -3.8 H11.5 Q13.8 -3.8 13.8 -1.5 V9.1 H-14.3 Z" fill="#10b0ee"/><rect x="-7.2" y="5.4" width="14.3" height="6.1" fill="#fff" stroke="#10b0ee" stroke-width="2"/></svg>
<svg style="left:153.29999999999998px;top:815.4000000000001px" width="55.6" height="55.6" viewBox="-27.8 -27.8 55.6 55.6"><circle cx="0" cy="0" r="24.6" fill="none" stroke="#22b6ec" stroke-width="2.4"/><g fill="#10b0ee"><path d="M-14.3 -9.6 H10.2 V-1 Q5 0 3 5 V8.7 H-14.3 Z"/></g><path d="M-14.3 -9.6 L-2 1.5 L10.2 -9.6" fill="none" stroke="#fff" stroke-width="2"/><path d="M3.5 3 Q4 0.5 8 0.5 V-2.5 L14.5 3.5 L8 9.5 V6.5 Q5 6.5 3.5 8 Z" fill="#10b0ee" stroke="#fff" stroke-width="0.8"/></svg>
<svg style="left:818px;top:594.7px" width="18" height="24" viewBox="0 0 18 24"><path d="M2.4 2.2 V18.6 L6.4 14.6 L9.4 20.6 Q10.2 21.6 11.6 20.8 Q12.6 20 12 18.8 L9.2 13.8 H13.8 Z" fill="#fff" stroke="#1a1a1a" stroke-width="1.3" stroke-linejoin="round"/></svg>
</body></html>
